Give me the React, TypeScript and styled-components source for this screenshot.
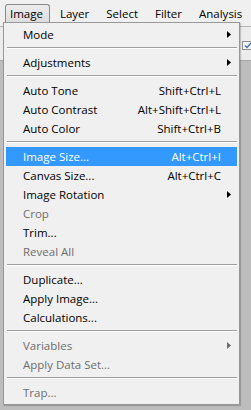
import React from "react";
import styled, { createGlobalStyle } from "styled-components";

const GlobalStyle = createGlobalStyle`
  html, body { margin: 0; padding: 0; }
  body {
    background: #bdbdbd;
    font-family: "Open Sans", "Noto Sans", "DejaVu Sans", sans-serif;
  }
`;

const Page = styled.div`
  position: relative;
  width: 251px;
  height: 410px;
  overflow: hidden;
  display: flex;
  flex-direction: column;
  background: #bdbdbd;
  font-size: 11.5px;
`;

const MenuBar = styled.div`
  height: 27px;
  display: flex;
  align-items: flex-start;
  padding: 4px 0 0 5px;
  box-sizing: border-box;
  background: #f0f0f0;
  border-bottom: 1px solid #b4b4b4;
`;

const BarItem = styled.div<{ $active?: boolean }>`
  height: 18px;
  box-sizing: border-box;
  display: flex;
  align-items: center;
  padding: 0 6px 0 4px;
  margin-right: 5px;
  color: #000;
  white-space: nowrap;
  border: 1px solid ${(p) => (p.$active ? "#8a8a8a" : "transparent")};
  border-bottom: none;
  border-radius: 3px 3px 0 0;
  background: ${(p) => (p.$active ? "linear-gradient(#ececec, #dedede)" : "transparent")};
`;

const OptionsBar = styled.div`
  height: 34px;
  box-sizing: border-box;
  display: flex;
  align-items: flex-start;
  padding-top: 14px;
  background: #ececec;
  border-bottom: 1px solid #a8a8a8;
`;

const CheckBox = styled.div`
  margin-left: auto;
  margin-right: -2px;
  width: 11px;
  height: 9px;
  box-sizing: border-box;
  border: 1px solid #8e8f8f;
  background: #f4f4f4;
  display: flex;
  align-items: center;
  justify-content: center;
`;

const Workspace = styled.div`
  flex: 1;
  background: #bdbdbd;
`;

const Dropdown = styled.div`
  position: absolute;
  left: 3px;
  top: 22px;
  width: 237px;
  box-sizing: border-box;
  border: 1px solid #979797;
  background: #f0f0f0;
  padding: 2px 0;
  box-shadow: 1px 1px 1px rgba(0, 0, 0, 0.18);
`;

const Item = styled.div<{ $disabled?: boolean; $highlighted?: boolean }>`
  height: 19px;
  margin: 0 2px;
  padding-left: 17px;
  display: flex;
  align-items: center;
  white-space: nowrap;
  color: ${(p) => (p.$highlighted ? "#ffffff" : p.$disabled ? "#6d6d6d" : "#000000")};
  background: ${(p) => (p.$highlighted ? "#3399ff" : "transparent")};
`;

const Label = styled.span`
  flex: 1;
`;

const Shortcut = styled.span`
  text-align: right;
`;

const ArrowSlot = styled.span`
  width: 16px;
  height: 19px;
  display: flex;
  align-items: center;
  padding-left: 6px;
  box-sizing: border-box;
`;

const Separator = styled.div`
  margin: 3px 2px 4px 3px;
  border-top: 1px solid #a0a0a0;
  border-bottom: 1px solid #ffffff;
`;

type Entry =
  | { sep: true }
  | {
      sep?: false;
      label: string;
      shortcut?: string;
      sub?: boolean;
      disabled?: boolean;
      highlighted?: boolean;
    };

const entries: Entry[] = [
  { label: "Mode", sub: true },
  { sep: true },
  { label: "Adjustments", sub: true },
  { sep: true },
  { label: "Auto Tone", shortcut: "Shift+Ctrl+L" },
  { label: "Auto Contrast", shortcut: "Alt+Shift+Ctrl+L" },
  { label: "Auto Color", shortcut: "Shift+Ctrl+B" },
  { sep: true },
  { label: "Image Size...", shortcut: "Alt+Ctrl+I", highlighted: true },
  { label: "Canvas Size...", shortcut: "Alt+Ctrl+C" },
  { label: "Image Rotation", sub: true },
  { label: "Crop", disabled: true },
  { label: "Trim..." },
  { label: "Reveal All", disabled: true },
  { sep: true },
  { label: "Duplicate..." },
  { label: "Apply Image..." },
  { label: "Calculations..." },
  { sep: true },
  { label: "Variables", sub: true, disabled: true },
  { label: "Apply Data Set...", disabled: true },
  { sep: true },
  { label: "Trap...", disabled: true },
];

const Arrow = ({ color }: { color: string }) => (
  <svg width="4" height="7" viewBox="0 0 4 7">
    <polygon points="0,0 4,3.5 0,7" fill={color} />
  </svg>
);

export default function App() {
  return (
    <>
      <GlobalStyle />
      <Page>
        <MenuBar>
          <BarItem $active>Image</BarItem>
          <BarItem>Layer</BarItem>
          <BarItem>Select</BarItem>
          <BarItem>Filter</BarItem>
          <BarItem>Analysis</BarItem>
        </MenuBar>
        <OptionsBar>
          <CheckBox>
            <svg width="8" height="7" viewBox="0 0 8 7">
              <path d="M1 3.5 L3 5.5 L7 1" stroke="#3a6fc4" strokeWidth="1.4" fill="none" />
            </svg>
          </CheckBox>
        </OptionsBar>
        <Workspace />
        <Dropdown>
          {entries.map((e, i) =>
            e.sep ? (
              <Separator key={i} />
            ) : (
              <Item key={i} $disabled={e.disabled} $highlighted={e.highlighted}>
                <Label>{e.label}</Label>
                {e.shortcut && <Shortcut>{e.shortcut}</Shortcut>}
                <ArrowSlot>
                  {e.sub && <Arrow color={e.disabled ? "#6d6d6d" : "#000"} />}
                </ArrowSlot>
              </Item>
            )
          )}
        </Dropdown>
      </Page>
    </>
  );
}
